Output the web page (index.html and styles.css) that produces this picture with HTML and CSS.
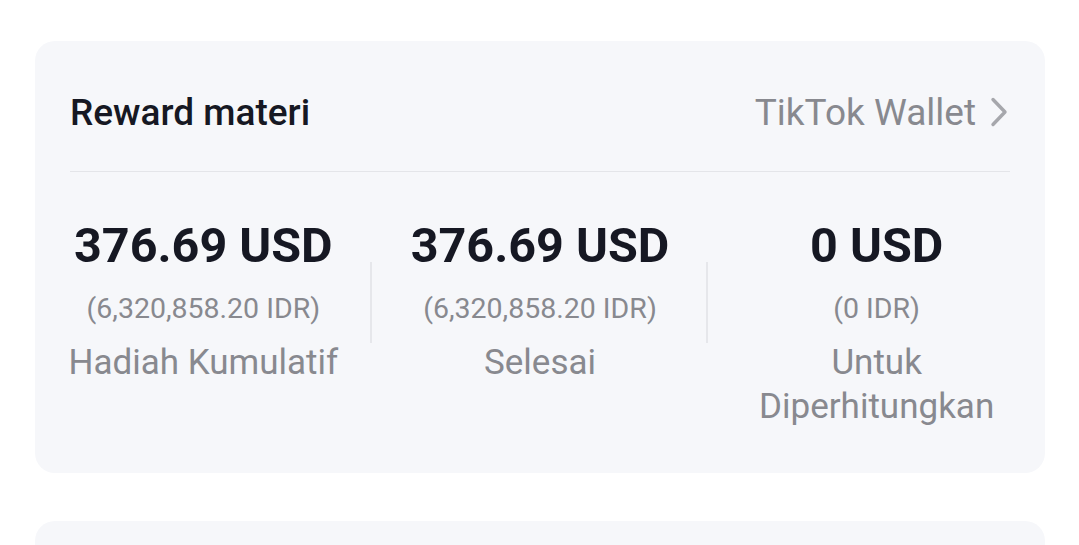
FILE: index.html
```html
<!DOCTYPE html>
<html lang="id">
<head>
<meta charset="utf-8">
<link rel="stylesheet" href="styles.css">
</head>
<body>
<div class="page">
  <section class="card">
    <div class="card-head">
      <h2 class="title">Reward materi</h2>
      <a class="wallet-link">TikTok Wallet
        <svg class="chev" width="18" height="32" viewBox="0 0 18 32"><path d="M3 3.5 L15 16 L3 28.5" fill="none" stroke="#a6a7ac" stroke-width="3.4" stroke-linecap="round" stroke-linejoin="round"/></svg>
      </a>
    </div>
    <div class="stats">
      <div class="stat">
        <div class="amount">376.69 USD</div>
        <div class="sub">(6,320,858.20 IDR)</div>
        <div class="label">Hadiah Kumulatif</div>
      </div>
      <div class="stat">
        <div class="amount">376.69 USD</div>
        <div class="sub">(6,320,858.20 IDR)</div>
        <div class="label">Selesai</div>
      </div>
      <div class="stat">
        <div class="amount">0 USD</div>
        <div class="sub">(0 IDR)</div>
        <div class="label">Untuk<br>Diperhitungkan</div>
      </div>
    </div>
  </section>
  <section class="card card-next"></section>
</div>
</body>
</html>
```

FILE: styles.css
```css
* { box-sizing: border-box; }
html, body { margin: 0; padding: 0; background: #ffffff; }
body { font-family: Roboto, "Noto Sans", sans-serif; overflow: hidden; height: 545px; }
.page { padding: 41px 34px 0 35px; display: flex; flex-direction: column; gap: 48px; }
.card { background: #f6f7fa; border-radius: 20px; }
.card-head {
  margin: 0 35px;
  height: 131px;
  display: flex;
  align-items: center;
  justify-content: space-between;
  border-bottom: 1px solid #e4e5e9;
  padding-top: 12px;
}
.title { margin: 0; font-size: 37px; font-weight: 500; color: #161823; line-height: normal; }
.wallet-link { display: flex; align-items: center; gap: 14px; font-size: 37px; color: #88898f; margin-right: 2px; }
.chev { display: block; }
.stats { display: grid; grid-template-columns: repeat(3, 1fr); padding: 46px 0 44px; }
.stat { display: flex; flex-direction: column; align-items: center; text-align: center; position: relative; }
.stat + .stat::before {
  content: ""; position: absolute; left: -2px; top: 44px; height: 81px; width: 2px; background: #e6e7eb;
}
.amount { font-size: 48.5px; font-weight: 700; color: #161823; line-height: 56px; }
.sub { font-size: 28.5px; color: #88898f; line-height: 44px; margin-top: 13px; }
.label { font-size: 35px; color: #88898f; line-height: 44px; margin-top: 10px; }
.card-next { height: 24px; border-radius: 20px 20px 0 0; }
```
